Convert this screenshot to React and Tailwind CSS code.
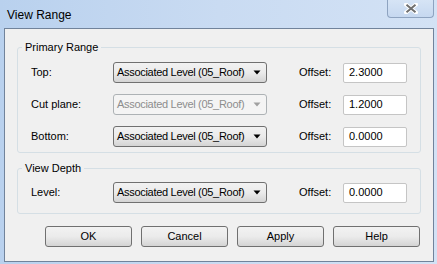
import React from "react";

const font = "font-['Liberation_Sans',Arial,sans-serif]";

function Dropdown({ disabled }) {
  return (
    <div
      className={
        "flex items-center justify-between w-[154px] h-[21px] rounded-[3px] border pl-[3px] pr-[5px] " +
        (disabled
          ? "border-[#adb2b5] bg-[#f4f4f4] text-[#8d8d8d]"
          : "border-[#707070] bg-gradient-to-b from-[#f2f2f2] via-[#ebebeb] to-[#d4d4d4] text-black")
      }
    >
      <span className="whitespace-nowrap tracking-[-0.3px]">Associated Level (05_Roof)</span>
      <svg width="8" height="5" viewBox="0 0 8 5">
        <path d="M0.5 0.5 H7.5 L4 4.5 Z" fill={disabled ? "#a0a0a0" : "#000"} />
      </svg>
    </div>
  );
}

function Row({ label, value, disabled }) {
  return (
    <div className="flex items-center h-[21px]">
      <span className="w-[82px] pl-[13px] box-content">{label}</span>
      <Dropdown disabled={disabled} />
      <span className="ml-[32px] w-[44px]">Offset:</span>
      <div className="w-[64px] h-[20px] bg-white border border-[#c5c5c5] rounded-[2px] flex items-center pl-[5px]">
        {value}
      </div>
    </div>
  );
}

function Group({ title, children, className }) {
  return (
    <fieldset className={"mx-[12px] border border-[#d5dfe5] rounded-[3px] " + className}>
      <legend className="ml-[4px] px-[3px] leading-[16px]">{title}</legend>
      {children}
    </fieldset>
  );
}

function Button({ children }) {
  return (
    <div className="w-[87px] h-[21px] rounded-[3px] border border-[#707070] bg-gradient-to-b from-[#f2f2f2] via-[#ebebeb] to-[#d4d4d4] flex items-center justify-center">
      {children}
    </div>
  );
}

export default function App() {
  return (
    <div className={"w-[437px] h-[264px] flex flex-col bg-gradient-to-r from-[#b9d1ee] via-[#c9dbf2] to-[#d3e2f5] text-[11px] text-black " + font}>
      {/* Title bar */}
      <div className="h-[28px] flex items-start justify-between">
        <span className="ml-[7px] mt-[6px] text-[12px] text-black">View Range</span>
        <div className="mr-[3px] w-[47px] h-[18px] rounded-b-[4px] border border-t-0 border-[#8ea3c0] bg-gradient-to-b from-[#d6e4f5] to-[#c6d8f0] flex items-center justify-center">
          <svg width="14" height="11" viewBox="0 0 14 11">
            <path
              d="M2 1.5 L7 5.5 L12 1.5 M2 9.5 L7 5.5 L12 9.5"
              stroke="#ffffff"
              strokeWidth="4"
              fill="none"
              strokeLinecap="round"
            />
            <path
              d="M2.5 1.8 L7 5.5 L11.5 1.8 M2.5 9.2 L7 5.5 L11.5 9.2"
              stroke="#6f6f6f"
              strokeWidth="2"
              fill="none"
            />
          </svg>
        </div>
      </div>

      {/* Client area */}
      <div className="ml-[4px] mr-[3px] h-[234px] border border-[#71839b] bg-[#f0f0f0] pt-[10px]">
        <Group title="Primary Range" className="pt-[7px] pb-[5px]">
          <div className="flex flex-col gap-[11px]">
            <Row label="Top:" value="2.3000" />
            <Row label="Cut plane:" value="1.2000" disabled />
            <Row label="Bottom:" value="0.0000" />
          </div>
        </Group>
        <Group title="View Depth" className="mt-[7px] pt-[6px] pb-[10px]">
          <Row label="Level:" value="0.0000" />
        </Group>
        <div className="flex gap-[9px] ml-[40px] mt-[12px]">
          <Button>OK</Button>
          <Button>Cancel</Button>
          <Button>Apply</Button>
          <Button>Help</Button>
        </div>
      </div>
    </div>
  );
}
